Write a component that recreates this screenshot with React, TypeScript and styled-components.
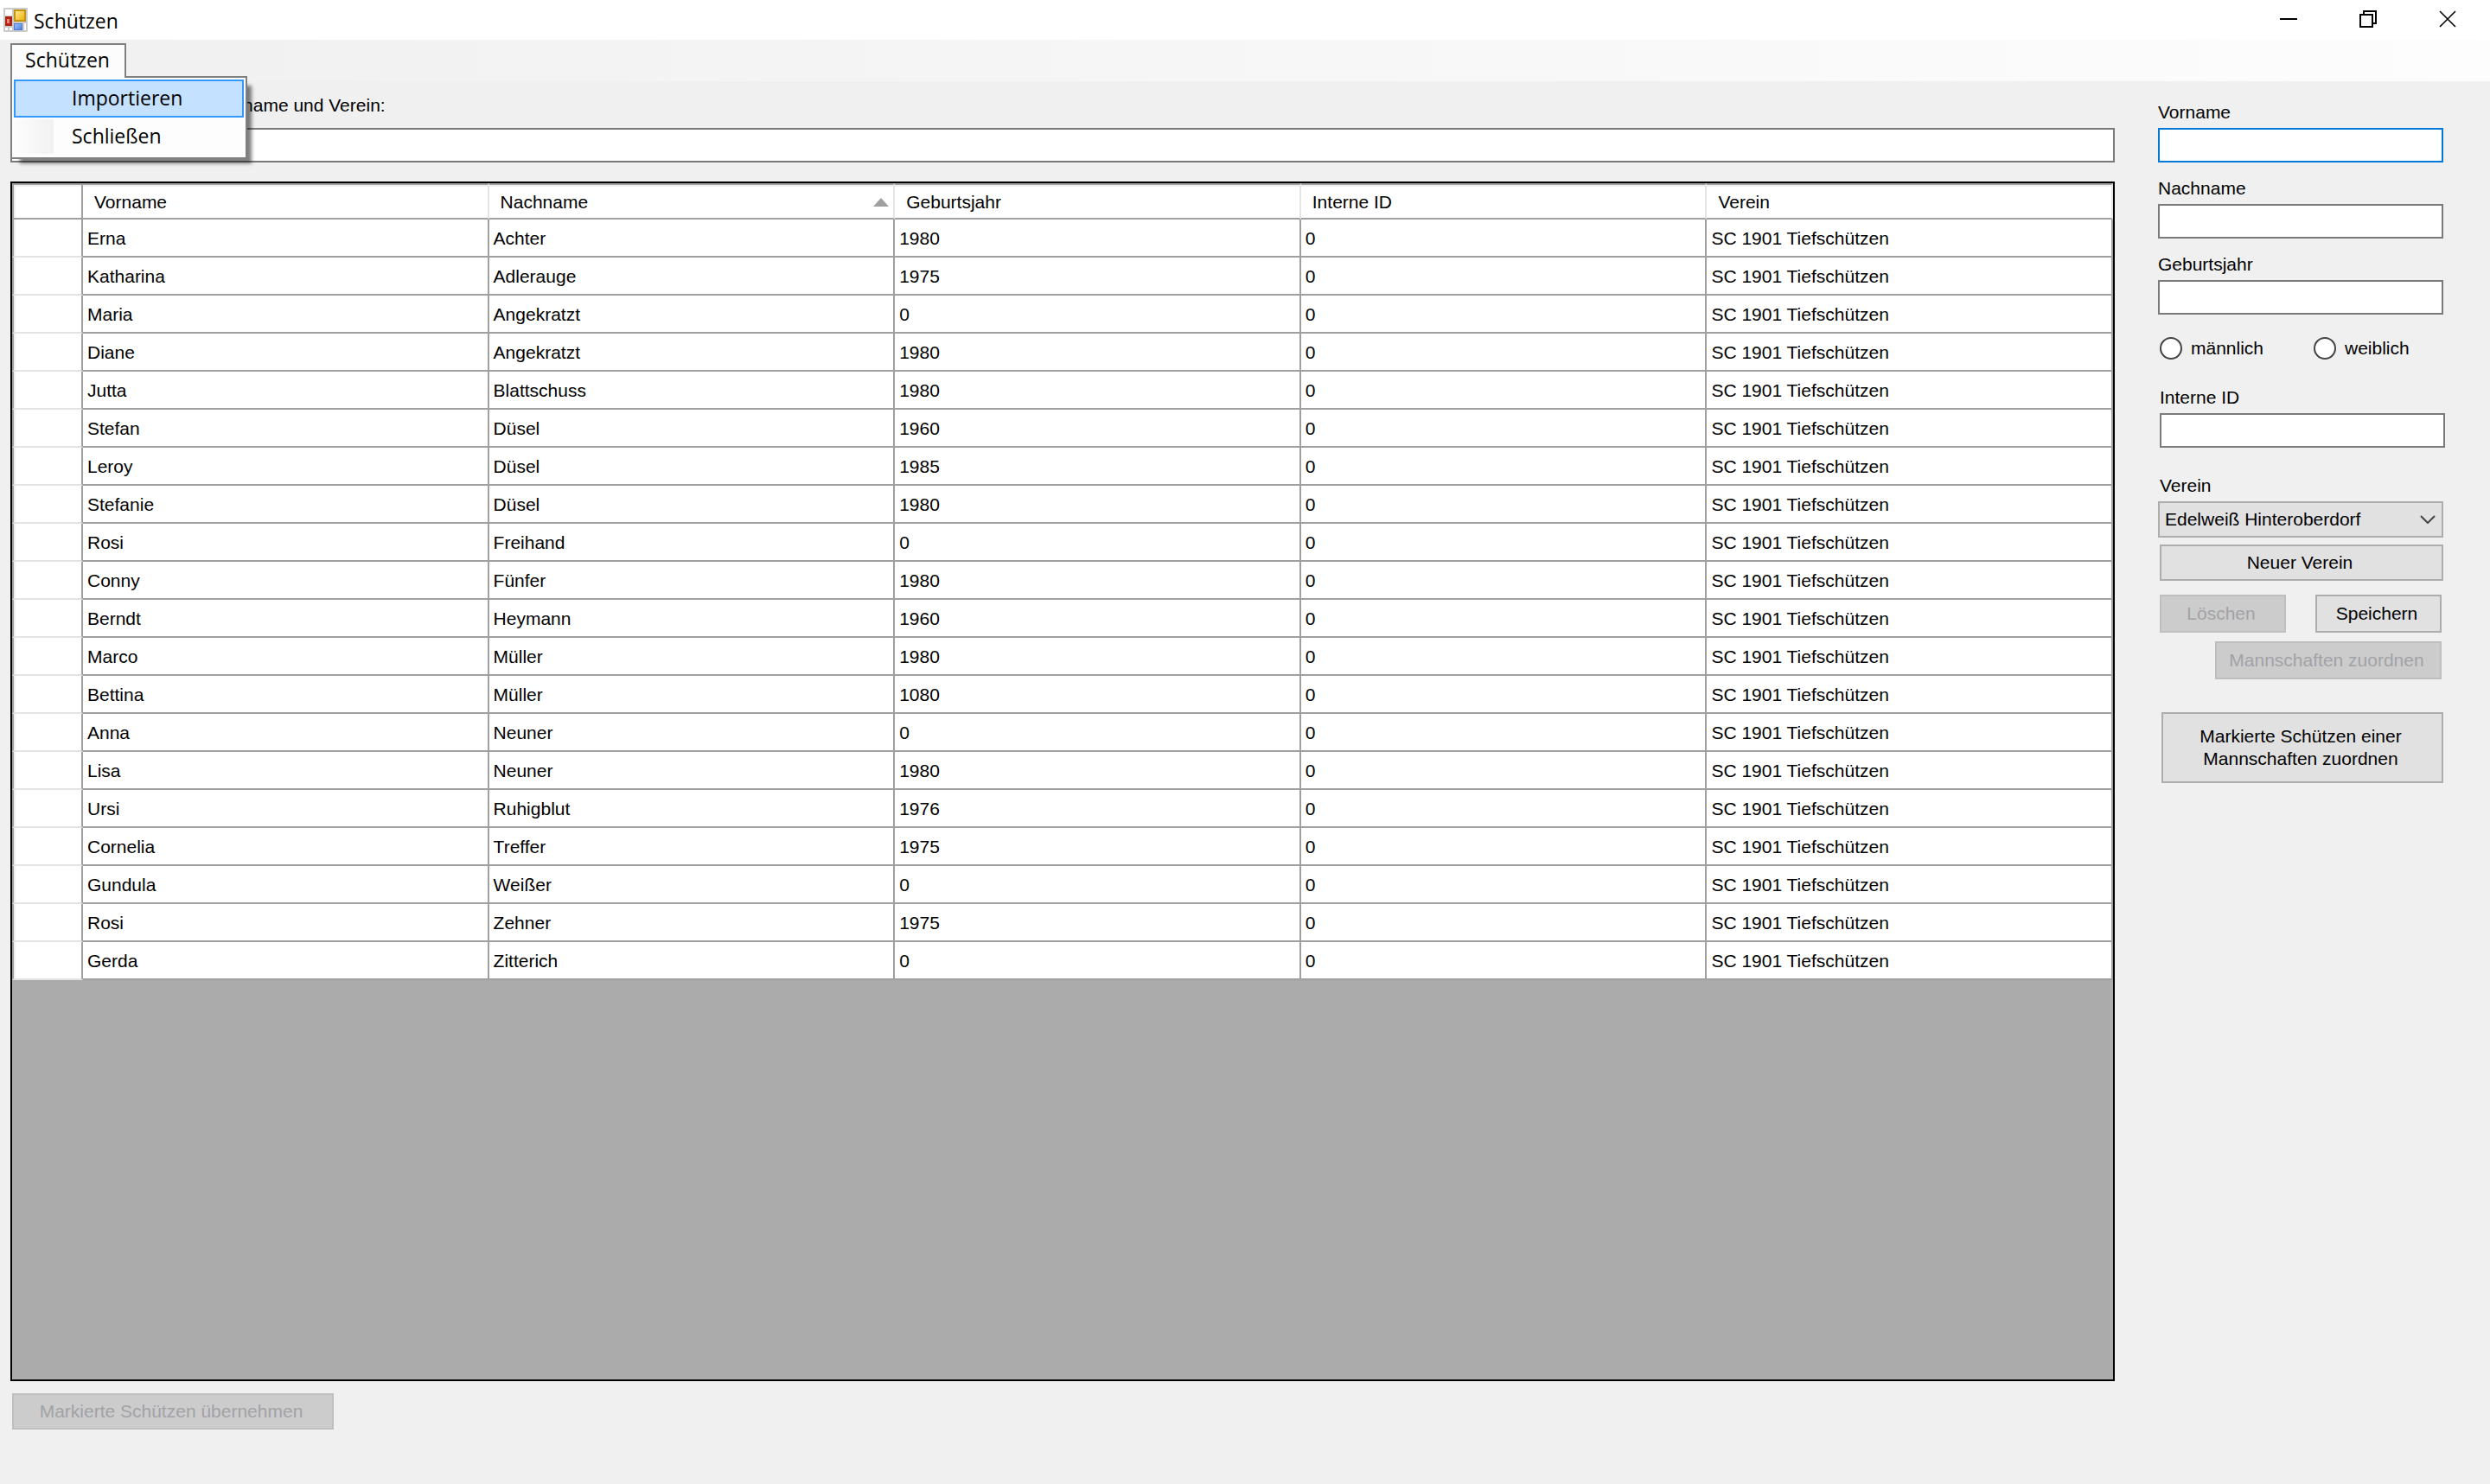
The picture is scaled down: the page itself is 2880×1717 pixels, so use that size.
import React from "react";
import styled, { createGlobalStyle, css } from "styled-components";

const GlobalStyle = createGlobalStyle`
  * { box-sizing: border-box; }
  html, body, #root { height: 100%; }
  body {
    margin: 0;
    background: #f0f0f0;
    color: #000;
    font: 21px/26px "Liberation Sans", Arial, sans-serif;
  }
  button, input, select { font: inherit; color: inherit; margin: 0; }
`;

const uiFont = css`
  font-family: "Open Sans", "Noto Sans", sans-serif;
  font-size: 23px;
  line-height: 30px;
`;

const Window = styled.div`
  display: flex;
  flex-direction: column;
  min-height: 100%;
`;

const TitleBar = styled.header`
  ${uiFont}
  display: flex;
  align-items: center;
  height: 46px;
  padding: 0 3px 0 4px;
  background: #fff;
`;

const Title = styled.h1`
  flex: 1;
  margin: 0 0 0 7px;
  padding-top: 1px;
  font: inherit;
`;

const CaptionButton = styled.button`
  display: flex;
  align-items: center;
  justify-content: center;
  width: 92px;
  height: 46px;
  padding: 0 0 2px;
  border: 0;
  background: none;
`;

const MenuBar = styled.nav`
  ${uiFont}
  height: 48px;
  padding: 4px 12px 0;
  background: linear-gradient(90deg, #f0f0f0, #fdfdfd);
`;

const MenuAnchor = styled.div`
  position: relative;
  width: 134px;
`;

const MenuTitle = styled.button`
  position: relative;
  z-index: 2;
  display: block;
  width: 100%;
  height: 40px;
  padding: 0 2px 4px 0;
  border: 2px solid #808080;
  border-bottom: 0;
  background: #fcfcfc;
  text-align: center;
`;

const Dropdown = styled.ul`
  position: absolute;
  z-index: 1;
  top: 38px;
  left: 0;
  width: 274px;
  margin: 0;
  padding: 2px;
  border: 2px solid #808080;
  background: #fdfdfd;
  box-shadow: 8px 8px 4px -3px rgba(0, 0, 0, 0.5);
  list-style: none;
`;

const MenuItem = styled.button<{ $active?: boolean }>`
  display: block;
  width: 100%;
  height: 44px;
  padding: 0 0 3px 65px;
  border: 2px solid transparent;
  background: linear-gradient(90deg, #fcfcfc, #f1f1f1) no-repeat 0 0 / 44px 100%;
  text-align: left;
  ${(p) => p.$active && css`
    border-color: #3399ff;
    background: #c4e1ff;
  `}
`;

const Content = styled.main`
  flex: 1;
  display: grid;
  grid-template-columns: minmax(0, 1fr) 332px;
  column-gap: 50px;
  padding: 15px 52px 63px 12px;
`;

const MainColumn = styled.section`
  display: flex;
  flex-direction: column;
`;

const Label = styled.label`
  display: block;
`;

const SearchLabel = styled(Label)`
  padding-left: 220px;
`;

const TextBox = styled.input`
  display: block;
  width: 100%;
  height: 40px;
  padding: 0 6px;
  border: 2px solid #7a7a7a;
  border-radius: 0;
  background: #fff;
  outline: 0;
  &:focus { border-color: #0078d7; }
`;

const SearchField = styled.div`
  display: flex;
  flex-direction: column;
  gap: 13px;
  margin-bottom: 22px;
`;

const GridFrame = styled.div`
  flex: 1;
  border: 2px solid #000;
  background: #ababab;
  margin-bottom: 14px;
`;

const DataTable = styled.table`
  width: 100%;
  border-collapse: separate;
  border-spacing: 0;
  table-layout: fixed;
  background: #fff;
`;

const RowHeaderCol = styled.col`
  width: 82px;
`;

const ColumnHeader = styled.th<{ $corner?: boolean }>`
  height: 42px;
  padding: 2px 13px 0;
  border-top: 2px solid #a0a0a0;
  border-bottom: 2px solid #a0a0a0;
  border-right: 2px solid ${(p) => (p.$corner ? "#a0a0a0" : "#e5e5e5")};
  ${(p) => p.$corner && css`border-left: 2px solid #a0a0a0;`}
  box-shadow: inset ${(p) => (p.$corner ? "2px" : "0")} 2px #f0f0f0;
  font-weight: normal;
  text-align: left;
`;

const HeaderContent = styled.span`
  display: flex;
  align-items: center;
  justify-content: space-between;
  margin-right: -8px;
`;

const RowHeader = styled.th`
  height: 44px;
  padding: 0;
  border-left: 2px solid #a0a0a0;
  border-right: 2px solid #a0a0a0;
  border-bottom: 2px solid #e3e3e3;
  box-shadow: inset 2px 0 #f0f0f0;
`;

const Cell = styled.td`
  height: 44px;
  padding: 2px 5px 0;
  border-right: 2px solid #a0a0a0;
  border-bottom: 2px solid #a0a0a0;
  white-space: nowrap;
`;

const PushButton = styled.button`
  height: 42px;
  padding: 0 10px 0 6px;
  border: 2px solid #adadad;
  border-radius: 0;
  background: #e1e1e1;
  &:disabled {
    border-color: #bfbfbf;
    background: #ccc;
    color: #a2a2a6;
  }
`;

const TransferButton = styled(PushButton)`
  align-self: flex-start;
  width: 372px;
  margin-left: 2px;
`;

const Sidebar = styled.form`
  display: flex;
  flex-direction: column;
  padding-top: 8px;
`;

const Field = styled.div<{ $inset?: boolean }>`
  display: flex;
  flex-direction: column;
  gap: 5px;
  margin-bottom: 17px;
  padding: ${(p) => (p.$inset ? "0 0 0 2px" : "0 2px 0 0")};
`;

const RadioRow = styled.fieldset`
  display: grid;
  grid-template-columns: 178px 1fr;
  margin: 9px 0 31px;
  padding: 0 0 0 2px;
  border: 0;
`;

const RadioLabel = styled.label`
  display: flex;
  align-items: center;
  gap: 10px;
`;

const Radio = styled.input`
  appearance: none;
  width: 26px;
  height: 26px;
  border: 2px solid #444;
  border-radius: 50%;
  background: #fff;
  &:checked { box-shadow: inset 0 0 0 5px #fff; background: #333; }
`;

const ClubField = styled.div`
  display: flex;
  flex-direction: column;
  gap: 5px;
  margin-top: 14px;
  padding-right: 2px;
`;

const ClubLabel = styled(Label)`
  padding-left: 2px;
`;

const SelectBox = styled.div`
  display: grid;
  align-items: center;
  > * { grid-area: 1 / 1; }
  > svg { justify-self: end; margin-right: 9px; pointer-events: none; }
`;

const Select = styled.select`
  appearance: none;
  width: 100%;
  height: 42px;
  padding: 0 34px 0 6px;
  border: 2px solid #adadad;
  border-radius: 0;
  background: #e1e1e1;
`;

const Actions = styled.div`
  display: flex;
  flex-direction: column;
  padding: 8px 2px 0 2px;
`;

const ActionPair = styled.div`
  display: flex;
  justify-content: space-between;
  margin: 16px 2px 10px 0;
`;

const SmallButton = styled(PushButton)`
  width: 146px;
  height: 44px;
`;

const AssignButton = styled(PushButton)`
  align-self: flex-end;
  width: 262px;
  height: 44px;
  margin-right: 2px;
  padding: 0 4px 0 0;
`;

const AssignMarkedButton = styled(PushButton)`
  height: 82px;
  margin: 38px 0 0 2px;
  padding: 0 32px 0 28px;
`;

const AppIcon = () => (
  <svg width="28" height="28" viewBox="0 0 28 28" aria-hidden="true">
    <defs>
      <linearGradient id="gold" x1="0" y1="0" x2="1" y2="1">
        <stop offset="0" stopColor="#ffe98a" />
        <stop offset="1" stopColor="#efb310" />
      </linearGradient>
      <linearGradient id="blue" x1="0" y1="0" x2="1" y2="1">
        <stop offset="0" stopColor="#9dc0fa" />
        <stop offset="1" stopColor="#4d80dc" />
      </linearGradient>
    </defs>
    <rect width="28" height="28" rx="1" fill="#cbcbcb" />
    <path d="M2 2h8v7H2zM2 23h3v3H2zM7 23h3v3H7zM24 18h2v8h-2z" fill="#fff" />
    <rect x="2" y="10" width="8" height="11" fill="#b02318" />
    <rect x="4" y="13" width="3" height="5" fill="#ee8675" />
    <rect x="12" y="2" width="14" height="14" fill="#c59410" />
    <rect x="14" y="4" width="10" height="10" fill="url(#gold)" />
    <rect x="12" y="18" width="10" height="8" fill="#4b7cd6" />
    <rect x="13" y="19" width="8" height="6" fill="url(#blue)" />
  </svg>
);

const people: [string, string, number][] = [
  ["Erna", "Achter", 1980],
  ["Katharina", "Adlerauge", 1975],
  ["Maria", "Angekratzt", 0],
  ["Diane", "Angekratzt", 1980],
  ["Jutta", "Blattschuss", 1980],
  ["Stefan", "Düsel", 1960],
  ["Leroy", "Düsel", 1985],
  ["Stefanie", "Düsel", 1980],
  ["Rosi", "Freihand", 0],
  ["Conny", "Fünfer", 1980],
  ["Berndt", "Heymann", 1960],
  ["Marco", "Müller", 1980],
  ["Bettina", "Müller", 1080],
  ["Anna", "Neuner", 0],
  ["Lisa", "Neuner", 1980],
  ["Ursi", "Ruhigblut", 1976],
  ["Cornelia", "Treffer", 1975],
  ["Gundula", "Weißer", 0],
  ["Rosi", "Zehner", 1975],
  ["Gerda", "Zitterich", 0],
];

const columns = ["Vorname", "Nachname", "Geburtsjahr", "Interne ID", "Verein"];

export default function App() {
  return (
    <Window>
      <GlobalStyle />
      <TitleBar>
        <AppIcon />
        <Title>Schützen</Title>
        <CaptionButton aria-label="Minimieren">
          <svg width="20" height="20" viewBox="0 0 20 20">
            <path d="M0 10h20" stroke="#000" strokeWidth="2" />
          </svg>
        </CaptionButton>
        <CaptionButton aria-label="Wiederherstellen">
          <svg width="20" height="20" viewBox="0 0 20 20" fill="none" stroke="#000" strokeWidth="2">
            <path d="M1 5h14v14H1zM5 5V1h14v14h-4" />
          </svg>
        </CaptionButton>
        <CaptionButton aria-label="Schließen">
          <svg width="20" height="20" viewBox="0 0 20 20">
            <path d="M1 1l18 18M19 1L1 19" stroke="#000" strokeWidth="1.6" />
          </svg>
        </CaptionButton>
      </TitleBar>

      <MenuBar>
        <MenuAnchor>
          <MenuTitle aria-expanded="true">Schützen</MenuTitle>
          <Dropdown>
            <li><MenuItem $active>Importieren</MenuItem></li>
            <li><MenuItem>Schließen</MenuItem></li>
          </Dropdown>
        </MenuAnchor>
      </MenuBar>

      <Content>
        <MainColumn>
          <SearchField>
            <SearchLabel htmlFor="search">Nachname und Verein:</SearchLabel>
            <TextBox id="search" />
          </SearchField>
          <GridFrame>
            <DataTable>
              <colgroup>
                <RowHeaderCol />
                {columns.map((c) => <col key={c} />)}
              </colgroup>
              <thead>
                <tr>
                  <ColumnHeader $corner />
                  {columns.map((c) => (
                    <ColumnHeader key={c} scope="col">
                      <HeaderContent>
                        {c}
                        {c === "Nachname" && (
                          <svg width="18" height="10" viewBox="0 0 18 10" aria-hidden="true">
                            <path d="M9 0l9 10H0z" fill="#a0a0a0" />
                          </svg>
                        )}
                      </HeaderContent>
                    </ColumnHeader>
                  ))}
                </tr>
              </thead>
              <tbody>
                {people.map(([first, last, year]) => (
                  <tr key={first + last}>
                    <RowHeader scope="row" />
                    <Cell>{first}</Cell>
                    <Cell>{last}</Cell>
                    <Cell>{year}</Cell>
                    <Cell>0</Cell>
                    <Cell>SC 1901 Tiefschützen</Cell>
                  </tr>
                ))}
              </tbody>
            </DataTable>
          </GridFrame>
          <TransferButton disabled>Markierte Schützen übernehmen</TransferButton>
        </MainColumn>

        <Sidebar>
          <Field>
            <Label htmlFor="first">Vorname</Label>
            <TextBox id="first" autoFocus />
          </Field>
          <Field>
            <Label htmlFor="last">Nachname</Label>
            <TextBox id="last" />
          </Field>
          <Field>
            <Label htmlFor="year">Geburtsjahr</Label>
            <TextBox id="year" />
          </Field>
          <RadioRow>
            <RadioLabel><Radio type="radio" name="gender" />männlich</RadioLabel>
            <RadioLabel><Radio type="radio" name="gender" />weiblich</RadioLabel>
          </RadioRow>
          <Field $inset>
            <Label htmlFor="internal">Interne ID</Label>
            <TextBox id="internal" />
          </Field>
          <ClubField>
            <ClubLabel htmlFor="club">Verein</ClubLabel>
            <SelectBox>
              <Select id="club">
                <option>Edelweiß Hinteroberdorf</option>
              </Select>
              <svg width="18" height="10" viewBox="0 0 18 10" aria-hidden="true">
                <path d="M1 1l8 8 8-8" fill="none" stroke="#444" strokeWidth="2" />
              </svg>
            </SelectBox>
          </ClubField>
          <Actions>
            <PushButton type="button">Neuer Verein</PushButton>
            <ActionPair>
              <SmallButton type="button" disabled>Löschen</SmallButton>
              <SmallButton type="button">Speichern</SmallButton>
            </ActionPair>
            <AssignButton type="button" disabled>Mannschaften zuordnen</AssignButton>
            <AssignMarkedButton type="button">
              Markierte Schützen einer Mannschaften zuordnen
            </AssignMarkedButton>
          </Actions>
        </Sidebar>
      </Content>
    </Window>
  );
}
